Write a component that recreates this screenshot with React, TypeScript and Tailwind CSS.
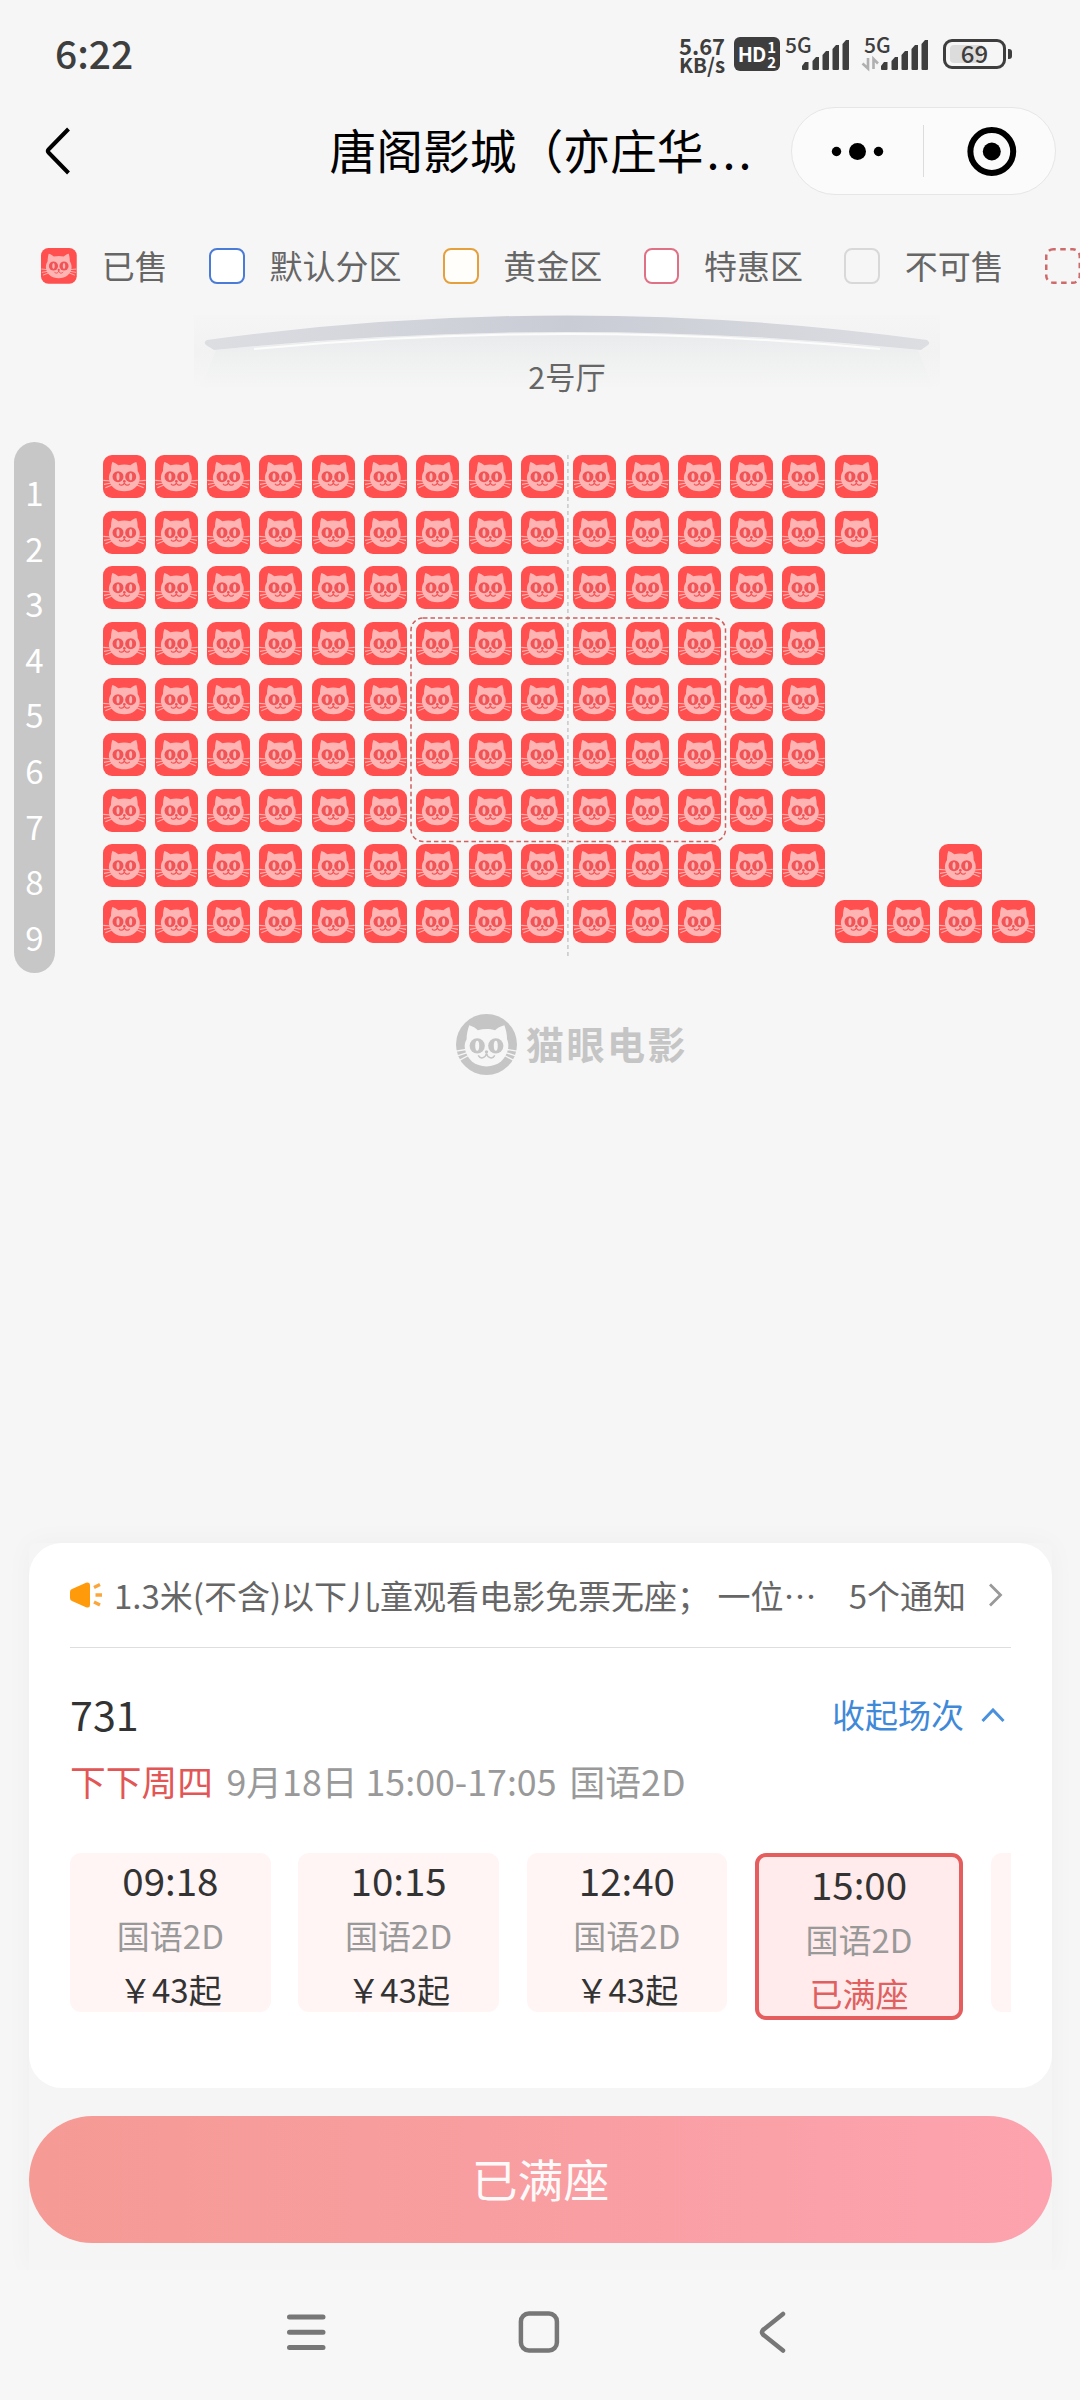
import React from "react";

const ROWS: number[][] = [
  [15], [15], [14], [14], [14], [14], [14],
  [14, 16],
  [12, 14, 15, 16, 17],
];

// Each row: first number is the count of leading seats, the rest are extra column indexes.
const SEATS = ROWS.flatMap(([count, ...extra], row) =>
  [...Array.from({ length: count }, (_, i) => i), ...extra].map((col) => ({ row, col }))
);

function CatSeat({ className }: { className: string }) {
  return (
    <svg viewBox="0 0 129 129" className={className}>
      <rect width="129" height="129" rx="27" fill="#ff504f" />
      <g stroke="#ffb0b0" strokeWidth="3.500" fill="none">
        <path d="M1 76L24 78M3 88L25 84M7 98L27 90M128 76L105 78M126 88L104 84M122 98L102 90" />
      </g>
      <path
        d="M28 21C34 22 41 27 46 31C58 28 70 28 82 31C87 27 94 22 100 21C103 30 104 40 104 48C109 56 111 64 110 73C107 95 89 109 64 109C39 109 21 95 18 73C17 64 19 56 24 48C24 40 25 30 28 21Z"
        fill="#ffb4b4"
      />
      <g fill="#f15456">
        <circle cx="45" cy="65" r="16.500" />
        <circle cx="83" cy="65" r="16.500" />
        <circle cx="64" cy="79" r="4" />
      </g>
      <ellipse cx="45" cy="65" rx="4.5" ry="11" fill="#ffb4b4" />
      <ellipse cx="83" cy="65" rx="4.5" ry="11" fill="#ffb4b4" />
      <path d="M48 86C52 93 62 92 64 83C66 92 76 93 80 86" stroke="#f15456" strokeWidth="3.5" fill="none" />
    </svg>
  );
}

function CatLogo() {
  return (
    <svg viewBox="0 0 184 184" className="h-[61px] w-[61px]">
      <circle cx="92" cy="92" r="92" fill="#c5c5c5" />
      <path
        d="M40 34C50 37 60 43 66 49C82 44 102 44 118 49C124 43 134 37 146 34C151 48 154 62 154 76C158 84 159 95 157 105C151 138 126 158 92 158C58 158 33 138 27 105C25 95 27 84 32 76C32 62 35 48 40 34Z"
        fill="#f6f6f6"
      />
      <g stroke="#f6f6f6" strokeWidth="4" fill="none">
        <path d="M0 112L30 107M4 126L32 117M10 140L36 126M184 112L154 107M180 126L152 117M174 140L148 126" />
      </g>
      <g fill="#c5c5c5">
        <circle cx="64" cy="96" r="23" />
        <circle cx="120" cy="96" r="23" />
        <circle cx="92" cy="114" r="5" />
      </g>
      <ellipse cx="64" cy="96" rx="6" ry="15" fill="#f6f6f6" />
      <ellipse cx="120" cy="96" rx="6" ry="15" fill="#f6f6f6" />
      <path d="M67 125C73 137 89 134 92 119C95 134 111 137 117 125" stroke="#c5c5c5" strokeWidth="4.5" fill="none" />
    </svg>
  );
}

function Signal({ data }: { data?: boolean }) {
  return (
    <div className="relative h-[34px] w-[66px]">
      <span className="absolute left-0 top-[-1px] text-[21px] font-medium leading-[16px]">5G</span>
      <svg viewBox="0 0 66 34" className="absolute inset-0 h-[34px] w-[66px] overflow-visible">
        <g fill="#3e3e3e">
          <path d="M17 32V29L20 25H23.5V32Q23.5 33 22.5 33H18Q17 33 17 32Z" />
          <path d="M27.500 32V24L31 20H34V32Q34 33 33 33H28.500Q27.500 33 27.500 32Z" />
          <path d="M37.500 32V18L41 14H44V32Q44 33 43 33H38.500Q37.500 33 37.500 32Z" />
          <path d="M47.500 32V12L51 8H54V32Q54 33 53 33H48.500Q47.500 33 47.500 32Z" />
          <path d="M57.500 32V7L61 3H64V32Q64 33 63 33H58.500Q57.500 33 57.500 32Z" />
        </g>
        {data && (
          <path d="M4 21V31.500L-1.500 26.500M9.500 32V22L14 26.500" fill="none" stroke="#b0b0b0" strokeWidth="2.600" />
        )}
      </svg>
    </div>
  );
}

function StatusBar() {
  return (
    <div className="flex h-[107px] items-start justify-between pl-[55px] pr-[68px] text-[#3e3e3e]">
      <span className="mt-[33px] text-[39px] font-medium leading-[39px]">6:22</span>
      <div className="mt-[37px] flex">
        <div className="-mt-[2px] w-[55px] text-[22px] font-bold leading-[20px]">
          <div>5.67</div>
          <div className="text-[20.500px] leading-[19px]">KB/s</div>
        </div>
        <div className="mr-[5px] flex h-[34px] w-[46px] items-center justify-center rounded-[6px] bg-[#3e3e3e] pb-px text-white">
          <span className="text-[20px] font-bold leading-none tracking-[-1px]">HD</span>
          <span className="ml-[2px] flex flex-col text-[15px] font-bold leading-[15px]">
            <span>1</span>
            <span>2</span>
          </span>
        </div>
        <div className="mr-[13px]"><Signal /></div>
        <div className="mr-[13px]"><Signal data /></div>
        <div className="mt-[2px] flex h-[30px] items-center">
          <div className="relative flex h-[30px] w-[63px] items-center justify-center rounded-[9px] border-[3px] border-[#3e3e3e]">
            <div className="absolute left-[4px] top-[3px] h-[18px] w-[32px] rounded-l-[4px] bg-[#dcdcdc]" />
            <span className="relative -top-px text-[24px] font-medium leading-none">69</span>
          </div>
          <div className="ml-[2px] h-[10px] w-[4px] rounded-r-[3px] bg-[#3e3e3e]" />
        </div>
      </div>
    </div>
  );
}

function Header() {
  return (
    <div className="flex h-[88px] items-center">
      <svg viewBox="0 0 28 48" className="ml-[44px] h-[48px] w-[28px]" fill="none" stroke="#000" strokeWidth="4">
        <path d="M24.500 2L4.500 22.500Q3 24 4.500 25.500L24.500 46" />
      </svg>
      <div className="ml-[257.500px] w-[461.500px] whitespace-nowrap pb-[5px] text-[46.75px] leading-[60px] text-black">
        唐阁影城（亦庄华<span className="ml-[3px] tracking-[3px]">...</span>
      </div>
      <div className="flex h-[88px] w-[265px] items-center rounded-full border border-[#e6e6e6] bg-[#fbfbfb]">
        <svg viewBox="0 0 131 52" className="h-[52px] w-[131px]">
          <circle cx="44.500" cy="26.500" r="4.700" />
          <circle cx="65.500" cy="26.500" r="8.500" />
          <circle cx="86.500" cy="26.500" r="4.700" />
        </svg>
        <div className="h-[52px] w-px bg-[#dcdcdc]" />
        <svg viewBox="0 0 131 52" className="h-[52px] w-[131px]">
          <circle cx="67.800" cy="26.500" r="21.400" fill="none" stroke="#000" strokeWidth="6" />
          <circle cx="67.800" cy="26.500" r="9" />
        </svg>
      </div>
    </div>
  );
}

const LEGEND = [
  { label: "已售", box: "" },
  { label: "默认分区", box: "border-[#4a7bd6] bg-white" },
  { label: "黄金区", box: "border-[#e5a03c] bg-[#fffefa]" },
  { label: "特惠区", box: "border-[#e07085] bg-white" },
  { label: "不可售", box: "border-[#d8d8d8] bg-[#f6f6f6]" },
];

function Legend() {
  return (
    <div className="mt-[36px] flex h-[70px] items-center gap-[41.25px] overflow-hidden whitespace-nowrap pl-[41.25px] text-[33px] leading-[48px] text-[#666]">
      {LEGEND.map((item) => (
        <div key={item.label} className="flex shrink-0 items-center gap-[24.75px]">
          {item.box ? (
            <div className={`h-[35.75px] w-[35.75px] rounded-[8px] border-2 ${item.box}`} />
          ) : (
            <CatSeat className="h-[35.75px] w-[35.75px]" />
          )}
          <span className="pb-[2px]">{item.label}</span>
        </div>
      ))}
      <svg viewBox="0 0 36 36" className="h-[36px] w-[36px] shrink-0" fill="none" stroke="#cf6a6a" strokeWidth="2.500">
        <rect x="1.250" y="1.250" width="33.500" height="33.500" rx="7" strokeDasharray="5.500 4.500" strokeDashoffset="3" />
      </svg>
    </div>
  );
}

function Screen() {
  return (
    <div className="relative ml-[194px] mt-[14px] h-[127px] w-[746px]">
      <svg viewBox="0 0 746 75" className="h-[75px] w-[746px]">
        <defs>
          <linearGradient id="arc" x1="0" x2="1" y1="0" y2="0">
            <stop offset="0" stopColor="#dddee2" />
            <stop offset="0.500" stopColor="#c9ccd5" />
            <stop offset="1" stopColor="#dddee2" />
          </linearGradient>
          <linearGradient id="glow" x1="0" x2="0" y1="0" y2="1">
            <stop offset="0" stopColor="#e9eaec" />
            <stop offset="0.450" stopColor="#eff0f0" />
            <stop offset="1" stopColor="#f6f6f6" />
          </linearGradient>
          <linearGradient id="haze" x1="0" x2="0" y1="0" y2="1">
            <stop offset="0" stopColor="#f5f5f5" />
            <stop offset="0.500" stopColor="#f2f2f2" />
            <stop offset="1" stopColor="#f6f6f6" />
          </linearGradient>
        </defs>
        <rect width="746" height="75" fill="url(#haze)" />
        <path d="M22 35Q373 0 724 35L740 75H6Z" fill="url(#glow)" />
        <path d="M60 34Q373 4 686 34" fill="none" stroke="#fcfcfc" strokeWidth="2" />
        <path d="M13 25Q373 -24 733 25Q737 28 734 30L727 35Q373 -1 20 35L12 30Q9 27 13 25Z" fill="url(#arc)" />
      </svg>
      <div className="absolute inset-x-0 top-[39px] text-center text-[30.250px] leading-[44px] text-[#666]">2号厅</div>
    </div>
  );
}

function SeatMap() {
  return (
    <div className="flex h-[531px] shrink-0">
      <div className="ml-[14px] w-[41px] rounded-full bg-[#c7c7c7] pt-[23px] text-center text-[33px] text-white">
        {ROWS.map((_, i) => (
          <div key={i} className="h-[55.600px] leading-[54px]">{i + 1}</div>
        ))}
      </div>
      <div className="relative ml-[47.600px] mt-[13px] grid h-[501px] grid-cols-[repeat(18,52.300px)] grid-rows-[repeat(9,55.650px)]">
        {SEATS.map(({ row, col }) => (
          <div key={`${row}-${col}`} style={{ gridRow: row + 1, gridColumn: col + 1 }}>
            <CatSeat className="h-[43px] w-[43px]" />
          </div>
        ))}
        <svg viewBox="0 0 941 505" className="absolute left-0 top-0 h-[505px] w-[941px]" fill="none">
          <path d="M464.900 0V503" stroke="#c8c8c8" strokeWidth="1.500" strokeDasharray="4 3" />
          <rect x="308" y="163" width="314.500" height="223.500" rx="12" stroke="#d05f5f" strokeWidth="1.500" strokeDasharray="4.500 3" />
        </svg>
      </div>
    </div>
  );
}

const SHOWS = ["09:18", "10:15", "12:40"];

function ShowTimes() {
  return (
    <div className="mt-[43px] flex h-[172px] items-start gap-[27.500px] overflow-hidden whitespace-nowrap pt-[5px] text-center text-[33px]">
      {SHOWS.map((time) => (
        <div key={time} className="h-[159px] w-[200.750px] shrink-0 rounded-[11px] bg-[#fff5f5] text-[#333]">
          <div className="text-[38.500px] leading-[52px]">{time}</div>
          <div className="leading-[61px] text-[#999]">国语2D</div>
          <div className="leading-[46px]">￥43起</div>
        </div>
      ))}
      <div className="h-[167px] w-[208.500px] shrink-0 rounded-[11px] border-4 border-[#e55d5d] bg-[#ffebeb]">
        <div className="text-[38.500px] leading-[52px] text-[#333]">15:00</div>
        <div className="leading-[61px] text-[#999]">国语2D</div>
        <div className="leading-[46px] text-[#e0605f]">已满座</div>
      </div>
      <div className="h-[159px] w-[200.750px] shrink-0 rounded-[11px] bg-[#fff5f5]" />
    </div>
  );
}

function InfoCard() {
  return (
    <div className="h-[545px] rounded-[33px] bg-white px-[41px] text-[33px]">
      <div className="flex h-[105px] items-center whitespace-nowrap border-b border-[#dedede] text-[#666]">
        <svg viewBox="0 0 34 28" className="h-[28px] w-[34px]">
          <path d="M0 11Q0 8.500 2 8L16 1.800Q20 0.500 20 4V24Q20 27.500 16 26.200L2 20Q0 19.500 0 17Z" fill="#ff9a0b" />
          <path d="M24 6.500L30 3.500M25.500 14H32M24 21L30 24" stroke="#fba63a" strokeWidth="3.400" />
        </svg>
        <span className="ml-[10px] leading-[48px]">1.3米(不含)以下儿童观看电影免票无座； 一位⋯</span>
        <span className="ml-auto leading-[48px]">5个通知</span>
        <svg viewBox="0 0 16 24" className="ml-[22px] mr-[7px] h-[24px] w-[16px]" fill="none" stroke="#999" strokeWidth="2.800">
          <path d="M2 1.500L12.500 12L2 22.500" />
        </svg>
      </div>
      <div className="mt-[36px] flex h-[64px] items-center text-[#3f89d8]">
        <span className="pb-[7px] text-[41.250px] leading-[60px] text-[#333]">731</span>
        <span className="ml-auto pb-[4px] leading-[48px]">收起场次</span>
        <svg viewBox="0 0 24 16" className="ml-[17px] mr-[6px] h-[16px] w-[24px]" fill="none" stroke="#4a90dc" strokeWidth="3">
          <path d="M1.500 13L12 2L22.500 13" />
        </svg>
      </div>
      <div className="mt-[9px] flex h-[48px] items-center whitespace-nowrap text-[35.750px] leading-[48px] text-[#999]">
        <span className="text-[#e25756]">下下周四</span>
        <span className="ml-[13.500px]">9月18日 15:00-17:05</span>
        <span className="ml-[13px]">国语2D</span>
      </div>
      <ShowTimes />
    </div>
  );
}

function SystemNav() {
  return (
    <div className="relative flex h-[130px] shrink-0 items-center bg-[#f7f7f7] pb-[6px]">
      <svg viewBox="0 0 40 44" className="ml-[286px] h-[44px] w-[40px]" stroke="#777" strokeWidth="5" strokeLinecap="round">
        <path d="M3.500 7H37M3.500 22.300H37M3.500 37.600H37" />
      </svg>
      <svg viewBox="0 0 44 44" className="ml-[191px] h-[44px] w-[44px]" fill="none" stroke="#777" strokeWidth="4.500">
        <rect x="3.900" y="3.500" width="36" height="37" rx="8" />
      </svg>
      <svg viewBox="0 0 30 44" className="ml-[197px] h-[44px] w-[30px]" fill="none" stroke="#777" strokeWidth="4.500" strokeLinecap="round">
        <path d="M25 4L5 20Q3 22.300 5 24.500L25 40.500" />
      </svg>
    </div>
  );
}

export default function App() {
  return (
    <div className="flex h-[2400px] w-[1080px] flex-col overflow-hidden bg-[#f6f6f6] font-['Noto_Sans_CJK_SC',sans-serif]">
      <StatusBar />
      <Header />
      <Legend />
      <Screen />
      <SeatMap />
      <div className="ml-[456px] mt-[41px] flex h-[61px] shrink-0 items-center text-[38px] font-bold leading-[61px] tracking-[2.500px] text-[#c5c5c5]">
        <CatLogo />
        <span className="ml-[9px] pb-[4px]">猫眼电影</span>
      </div>
      <div className="ml-[29px] mt-auto h-[727px] w-[1023px] shrink-0 rounded-t-[8px] bg-[#f5f5f5] shadow-[0_0_28px_rgba(0,0,0,0.035)]">
        <InfoCard />
        <button className="mt-[28px] flex h-[127px] w-full items-center justify-center rounded-full bg-linear-to-r from-[#f59a94] to-[#fca3af] pb-[2px] text-[45.800px] text-[#fffafa]">
          已满座
        </button>
      </div>
      <SystemNav />
    </div>
  );
}
